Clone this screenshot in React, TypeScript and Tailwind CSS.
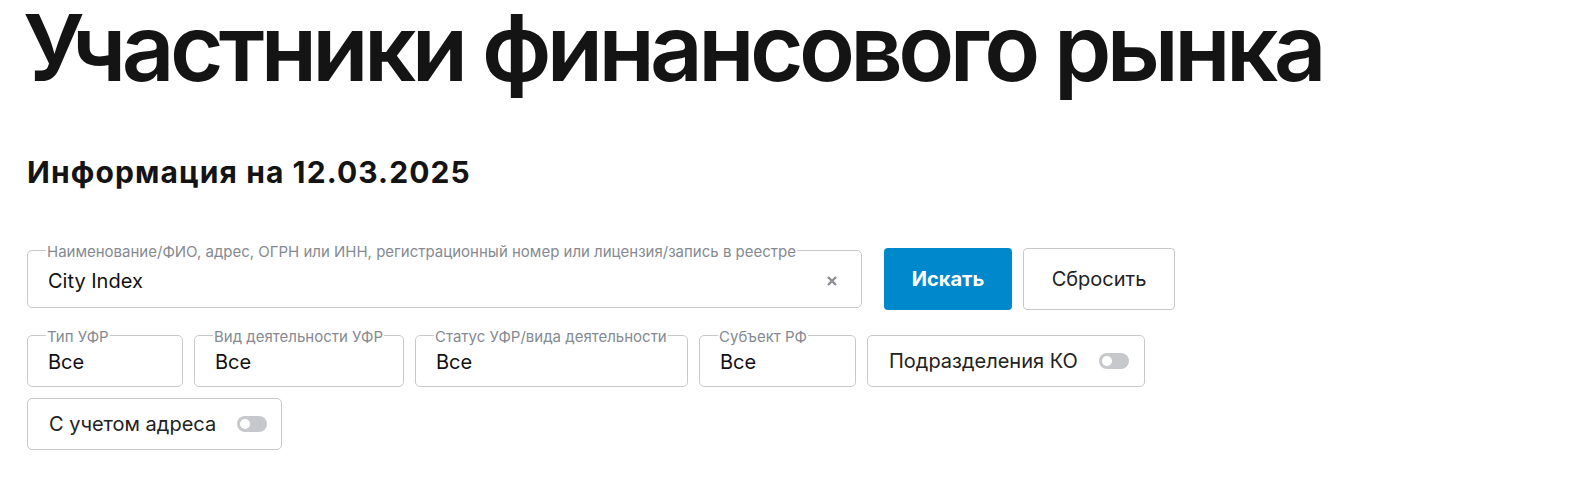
import React from "react";

function Toggle() {
  return (
    <span className="relative inline-block h-[16px] w-[30px] rounded-full bg-[#c6c8cc]">
      <span className="absolute left-[3px] top-[3px] h-[10px] w-[10px] rounded-full bg-white" />
    </span>
  );
}

function SelectBox({ label, width }: { label: string; width: string }) {
  return (
    <div className={`relative flex h-[52px] items-center rounded-[5px] border border-[#c9c9c9] pl-[20px] ${width}`}>
      <span className="absolute left-[18px] top-0 -translate-y-1/2 bg-white px-[1px] text-[15px] leading-none text-[#858a92]">
        {label}
      </span>
      <span className="mt-[2px] text-[20px] text-[#111]">Все</span>
    </div>
  );
}

export default function App() {
  return (
    <div className="min-h-[488px] bg-white pl-[27px] text-[#141414]" style={{ fontFamily: "Inter, 'Noto Sans', sans-serif" }}>
      <h1 className="-ml-[4px] text-[92px] font-semibold leading-[96px] tracking-[-4.65px]">Участники финансового рынка</h1>
      <h2 className="mt-[56px] text-[30px] font-bold leading-[40px] tracking-[1.1px]">Информация на 12.03.2025</h2>
      <div className="mt-[56px] flex w-[1160px] items-center">
        <div className="relative flex h-[58px] w-[835px] items-center rounded-[5px] border border-[#c9c9c9] pl-[20px] pr-[24px]">
          <span className="absolute left-[18px] top-0 -translate-y-1/2 bg-white px-[1px] text-[15px] leading-none text-[#858a92]">
            Наименование/ФИО, адрес, ОГРН или ИНН, регистрационный номер или лицензия/запись в реестре
          </span>
          <span className="mt-[3px] flex-1 text-[20px] text-[#111]">City Index</span>
          <svg width="10" height="10" viewBox="0 0 10 10" className="mt-[3px]">
            <path d="M1 1 L9 9 M9 1 L1 9" stroke="#8a8d93" strokeWidth="2.4" strokeLinecap="butt" />
          </svg>
        </div>
        <button className="ml-[22px] h-[62px] w-[128px] rounded-[4px] bg-[#0088cc] text-[20px] font-bold text-white">
          Искать
        </button>
        <button className="ml-[11px] h-[62px] w-[152px] rounded-[4px] border border-[#c9c9c9] bg-white text-[20px] text-[#222]">
          Сбросить
        </button>
      </div>
      <div className="mt-[25px] flex w-[1160px] flex-wrap gap-[11px]">
        <SelectBox label="Тип УФР" width="w-[156px]" />
        <SelectBox label="Вид деятельности УФР" width="w-[210px]" />
        <SelectBox label="Статус УФР/вида деятельности" width="w-[273px]" />
        <SelectBox label="Субъект РФ" width="w-[157px]" />
        <div className="flex h-[52px] w-[278px] items-center rounded-[5px] border border-[#c9c9c9] pl-[21px]">
          <span className="text-[20px] text-[#222]">Подразделения КО</span>
          <span className="ml-[21px] flex"><Toggle /></span>
        </div>
        <div className="flex h-[52px] w-[255px] items-center rounded-[5px] border border-[#c9c9c9] pl-[21px]">
          <span className="text-[20px] text-[#222]">С учетом адреса</span>
          <span className="ml-[21px] flex"><Toggle /></span>
        </div>
      </div>
    </div>
  );
}
